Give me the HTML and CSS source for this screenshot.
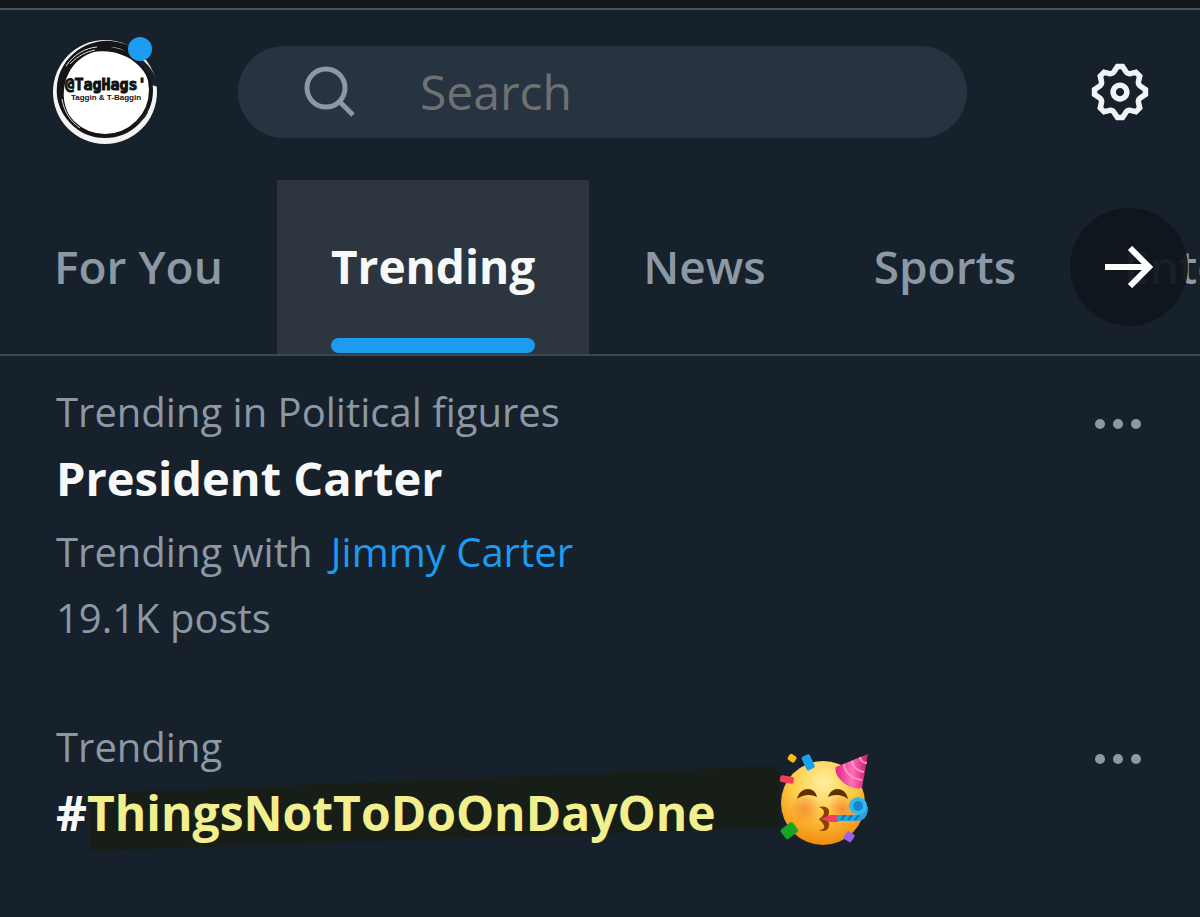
FILE: index.html
```html
<!DOCTYPE html>
<html lang="en">
<head>
  <meta charset="UTF-8">
  <meta name="viewport" content="width=device-width, initial-scale=1">
  <title>Explore</title>
  <link rel="stylesheet" href="styles.css">
</head>
<body>
  <header class="topbar">
    <a class="avatar" href="#profile" aria-label="Profile">
      <svg viewBox="0 0 106 106">
        <circle cx="53" cy="53" r="52" fill="#f4f4f4" />
        <ellipse cx="53" cy="51" rx="46" ry="46" fill="#fff" stroke="#151515" stroke-width="4" />
        <path d="M5 47C8 22 28 4 51 2c13-1 23 3 32 8-14-3-25-2-38 2C27 17 15 29 12 50c-2 17 6 31 16 40C13 81 3 66 5 47z" fill="#151515" />
        <path d="M30 15C42 8 60 6 74 12c12 6 22 17 24 32-5-12-12-20-23-26-14-7-30-7-45-3z" fill="#151515" />
        <path d="M27 87c14 13 38 14 53 3 13-9 20-22 19-39-3 18-10 31-23 38-15 9-34 9-49-2z" fill="#151515" />
        <path d="M78 15c14 4 25 15 28 33l-6-2c-3-12-10-22-22-31z" fill="#17212b" />
        <path d="M14 27C22 15 34 9 45 8M10 60c2 13 9 23 18 29M18 25c9-9 16-12 25-14" fill="none" stroke="#ddd" stroke-width="1" />
        <path d="M86 80c6-1 9-5 10-11M84 83c7-1 11-6 12-13" fill="none" stroke="#333" stroke-width="1" />
        <text x="54" y="51" class="avatar-name">@TagHags'</text>
        <text x="54" y="61" class="avatar-sub">Taggin &amp; T-Baggin</text>
      </svg>
      <span class="avatar-dot"></span>
    </a>
    <label class="search">
      <svg class="search-icon" viewBox="0 0 52 52">
        <circle cx="22" cy="22" r="19" />
        <path d="M35 35l14 14" />
      </svg>
      <input type="search" placeholder="Search" aria-label="Search">
    </label>
    <button class="settings" type="button" aria-label="Settings">
      <svg viewBox="0 0 24 24">
        <path d="M10.54 1.75h2.92l1.57 2.36c.11.17.32.25.53.21l2.53-.59 2.17 2.17-.58 2.54c-.05.2.04.41.21.53l2.36 1.57v2.92l-2.36 1.57c-.17.12-.26.33-.21.53l.58 2.54-2.17 2.17-2.53-.59c-.21-.04-.42.04-.53.21l-1.57 2.36h-2.92l-1.58-2.36c-.11-.17-.32-.25-.52-.21l-2.54.59-2.17-2.17.58-2.54c.05-.2-.03-.41-.21-.53l-2.35-1.57v-2.92L4.1 8.97c.18-.12.26-.33.21-.53L3.73 5.9 5.9 3.73l2.54.59c.2.04.41-.04.52-.21l1.58-2.36zm1.07 2l-.98 1.47C10.05 6.08 9 6.5 7.99 6.27l-1.46-.34-.6.6.33 1.46c.24 1.01-.18 2.07-1.05 2.64l-1.46.98v.78l1.46.98c.87.57 1.29 1.63 1.05 2.64l-.33 1.46.6.6 1.46-.34c1.01-.23 2.06.19 2.64 1.05l.98 1.47h.78l.97-1.47c.58-.86 1.63-1.28 2.65-1.05l1.45.34.61-.6-.34-1.46c-.23-1.01.18-2.07 1.05-2.64l1.47-.98v-.78l-1.47-.98c-.87-.57-1.28-1.63-1.05-2.64l.34-1.46-.61-.6-1.45.34c-1.02.23-2.07-.19-2.65-1.05l-.97-1.47h-.78zM12 10.5c-.83 0-1.5.67-1.5 1.5s.67 1.5 1.5 1.5c.82 0 1.5-.67 1.5-1.5s-.68-1.5-1.5-1.5zM8.5 12c0-1.93 1.56-3.5 3.5-3.5 1.93 0 3.5 1.57 3.5 3.5s-1.57 3.5-3.5 3.5c-1.94 0-3.5-1.57-3.5-3.5z" />
      </svg>
    </button>
  </header>

  <nav class="tabs">
    <a class="tab" href="#foryou">For You</a>
    <a class="tab active" href="#trending">Trending</a>
    <a class="tab" href="#news">News</a>
    <a class="tab" href="#sports">Sports</a>
    <a class="tab" href="#entertainment">Entertainment</a>
    <button class="tabs-next" type="button" aria-label="Next">
      <svg viewBox="0 0 50 42">
        <path d="M1 21h44M26 2l19 19-19 19" />
      </svg>
    </button>
  </nav>

  <main>
    <article class="trend">
      <div class="trend-body">
        <p class="meta">Trending in Political figures</p>
        <h2 class="title">President Carter</h2>
        <p class="meta related">Trending with <a href="#jimmy">Jimmy Carter</a></p>
        <p class="meta">19.1K posts</p>
      </div>
      <button class="more" type="button" aria-label="More">
        <svg viewBox="0 0 48 12">
          <circle cx="6" cy="6" r="5" /><circle cx="24" cy="6" r="5" /><circle cx="42" cy="6" r="5" />
        </svg>
      </button>
    </article>

    <article class="trend">
      <div class="trend-body">
        <p class="meta">Trending</p>
        <h2 class="title hashtag">#<mark>ThingsNotToDoOnDayOne</mark>
          <svg class="emoji" viewBox="0 0 92 94" role="img" aria-label="Partying face">
            <defs>
              <radialGradient id="face" cx="50%" cy="25%" r="75%">
                <stop offset="0" stop-color="#fff0a0" />
                <stop offset="0.5" stop-color="#fdcb45" />
                <stop offset="1" stop-color="#f48a0c" />
              </radialGradient>
              <radialGradient id="cheek">
                <stop offset="0" stop-color="#f3742f" stop-opacity="0.65" />
                <stop offset="1" stop-color="#f3742f" stop-opacity="0" />
              </radialGradient>
              <linearGradient id="hat">
                <stop offset="0" stop-color="#e32386" />
                <stop offset="0.5" stop-color="#ff70b5" />
                <stop offset="1" stop-color="#c91a70" />
              </linearGradient>
            </defs>
            <circle cx="45" cy="50" r="42" fill="url(#face)" />
            <circle cx="27" cy="56" r="16" fill="url(#cheek)" />
            <circle cx="64" cy="56" r="15" fill="url(#cheek)" />
            <path d="M19 46c3-13 18-13 20-2-6-3-14-3-20 2zM50 44c4-12 18-10 20 2-6-5-14-5-20-2z" fill="#603005" />
            <path d="M41 54c7-2 11 2 10 6 0 3-3 5-5 6 4 1 6 4 5 7-1 5-6 6-10 4 4 0 6-2 5-4 0-3-4-5-5-7 3-2 5-4 5-7 0-2-2-4-5-5z" fill="#8a3f06" />
            <path d="M43 66l9-4h8v7h-8z" fill="#f04260" />
            <path d="M59 62h21c4-1 6-4 6-8h4c0 9-4 14-11 14H59z" fill="#25a4df" />
            <path d="M63 67l4-5M70 67l4-5M77 67l4-5" stroke="#1270a8" stroke-width="2" />
            <circle cx="80" cy="53" r="7" fill="#1685cb" stroke="#33b9ef" stroke-width="4" />
            <path d="M90 1L58 14c-3 9 12 24 26 21z" fill="url(#hat)" />
            <path d="M66 11c0 8 8 15 18 16M74 8c1 6 5 10 12 11M82 4c0 3 3 6 7 6" fill="none" stroke="#ff94c9" stroke-width="2" />
            <rect x="10" y="1" width="8" height="7" rx="2" fill="#fdb913" transform="rotate(35 13 5)" />
            <rect x="26" y="2" width="9" height="15" rx="2" fill="#16a1f5" transform="rotate(-25 30 10)" />
            <rect x="2" y="23" width="14" height="7" rx="2" fill="#f23d5b" transform="rotate(10 9 26)" />
            <rect x="4" y="72" width="15" height="12" rx="2" fill="#16a425" transform="rotate(-38 11 78)" />
            <rect x="67" y="79" width="9" height="9" rx="2" fill="#9b62ed" transform="rotate(35 71 83)" />
          </svg>
        </h2>
      </div>
      <button class="more" type="button" aria-label="More">
        <svg viewBox="0 0 48 12">
          <circle cx="6" cy="6" r="5" /><circle cx="24" cy="6" r="5" /><circle cx="42" cy="6" r="5" />
        </svg>
      </button>
    </article>
  </main>
</body>
</html>
```
FILE: styles.css
```css
* {
  box-sizing: border-box;
}
body {
  margin: 0;
  min-height: 100vh;
  background: #17212b;
  border-top: 8px solid #141519;
  color: #f7f9f9;
  font-family: "Open Sans", sans-serif;
  overflow-x: hidden;
}
button {
  padding: 0;
  border: 0;
  background: none;
  cursor: pointer;
}
a {
  text-decoration: none;
}
svg {
  display: block;
}

.topbar {
  display: flex;
  align-items: center;
  gap: 80px;
  height: 172px;
  padding: 0 47px 6px 52px;
  border-top: 2px solid #4b545c;
}
.avatar {
  position: relative;
  flex: none;
  width: 106px;
}
.avatar-name,
.avatar-sub {
  fill: #111;
  stroke: #111;
  font-family: "DejaVu Sans Mono", monospace;
  font-weight: bold;
  text-anchor: middle;
}
.avatar-name {
  font-size: 15px;
}
.avatar-sub {
  font-family: "Liberation Sans Narrow", "Liberation Sans", sans-serif;
  font-size: 8px;
  stroke: none;
}
.avatar-dot {
  position: absolute;
  top: -2px;
  right: 6px;
  width: 24px;
  height: 24px;
  border-radius: 50%;
  background: #1d9bf0;
}
.search {
  display: flex;
  flex: 1;
  align-items: center;
  gap: 64px;
  height: 92px;
  padding: 0 66px;
  border-radius: 46px;
  background: #273340;
}
.search-icon {
  flex: none;
  width: 52px;
  fill: none;
  stroke: #8b98a5;
  stroke-width: 5;
}
.search input {
  width: 100%;
  min-width: 0;
  height: 66px;
  padding: 0 0 2px;
  border: 0;
  outline: 0;
  background: none;
  color: #f7f9f9;
  font: 48px "Open Sans", sans-serif;
}
.search input::placeholder {
  color: #6e7072;
}
.settings {
  flex: none;
  width: 66px;
  margin-left: 40px;
}
.settings svg {
  fill: #f1f4f6;
}

.tabs {
  position: relative;
  display: flex;
  height: 176px;
  border-bottom: 2px solid #3c4750;
  overflow: hidden;
}
.tab {
  position: relative;
  flex: none;
  padding: 0 54px;
  color: #8b98a5;
  font-size: 46px;
  font-weight: 600;
  line-height: 172px;
}
.tab.active {
  background: #2d363f;
  color: #f7f9f9;
  font-weight: 700;
}
.tab.active::after {
  content: "";
  position: absolute;
  right: 54px;
  bottom: 1px;
  left: 54px;
  height: 15px;
  border-radius: 8px;
  background: #1d9bf0;
}
.tabs-next {
  position: absolute;
  top: 28px;
  right: 12px;
  width: 118px;
  height: 118px;
  border-radius: 50%;
  background: rgba(16, 22, 28, 0.93);
}
.tabs-next svg {
  width: 50px;
  margin: 0 auto;
  fill: none;
  stroke: #fff;
  stroke-width: 6;
}

.trend {
  display: flex;
  justify-content: space-between;
  padding: 23px 58px 40px 56px;
}
.trend p,
.trend h2 {
  margin: 0;
}
.meta {
  color: #8b98a5;
  font-size: 40px;
  line-height: 66px;
}
.meta a {
  margin-left: 8px;
  color: #1d9bf0;
}
.title {
  font-size: 47px;
  font-weight: 700;
  line-height: 66px;
}
.trend .related {
  margin-top: 8px;
}
.more {
  width: 48px;
  height: 90px;
}
.more svg {
  width: 48px;
  fill: #8b98a5;
}
.hashtag {
  position: relative;
  z-index: 0;
  display: flex;
  align-items: center;
  font-size: 48px;
}
.hashtag mark {
  background: none;
  color: #f2ef8e;
}
/* marker stroke behind the hashtag */
.hashtag mark::before {
  content: "";
  position: absolute;
  z-index: -1;
  top: -14px;
  right: 90px;
  bottom: -5px;
  left: 34px;
  background: #171e18;
  clip-path: polygon(0 32%, 100% 0, 100% 72%, 0 100%);
}
.emoji {
  width: 92px;
  height: 94px;
  margin: -38px 0 -12px 62px;
}
```
